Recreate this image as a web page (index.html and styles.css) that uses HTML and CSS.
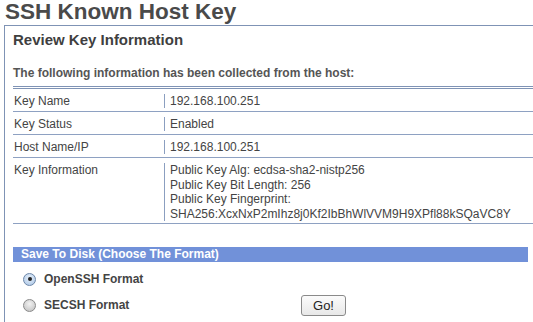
FILE: index.html
```html
<!DOCTYPE html>
<html lang="en">
<head>
    <meta charset="UTF-8">
    <title>SSH Known Host Key</title>
    <link rel="stylesheet" href="styles.css">
</head>
<body>
    <h1 class="page-title">SSH Known Host Key</h1>
    <div class="panel">
        <h2 class="panel-title">Review Key Information</h2>
        <p class="intro">The following information has been collected from the host:</p>

        <table class="key-table">
            <tr>
                <td class="key-label">Key Name</td>
                <td><div class="key-value">192.168.100.251</div></td>
            </tr>
            <tr>
                <td class="key-label">Key Status</td>
                <td><div class="key-value">Enabled</div></td>
            </tr>
            <tr>
                <td class="key-label">Host Name/IP</td>
                <td><div class="key-value">192.168.100.251</div></td>
            </tr>
            <tr class="multi">
                <td class="key-label">Key Information</td>
                <td>
                    <div class="key-value">
                        Public Key Alg: ecdsa-sha2-nistp256<br>
                        Public Key Bit Length: 256<br>
                        Public Key Fingerprint:<br>
                        SHA256:XcxNxP2mIhz8j0Kf2IbBhWlVVM9H9XPfl88kSQaVC8Y
                    </div>
                </td>
            </tr>
        </table>

        <div class="section-bar">Save To Disk (Choose The Format)</div>
        <form class="save-form">
            <label class="format-row">
                <input type="radio" name="format" value="openssh" checked>
                <span>OpenSSH Format</span>
            </label>
            <div class="format-row">
                <label class="format-option">
                    <input type="radio" name="format" value="secsh">
                    <span>SECSH Format</span>
                </label>
                <button type="button" class="go-button">Go!</button>
            </div>
        </form>
    </div>
</body>
</html>
```

FILE: styles.css
```css
* {
    margin: 0;
    padding: 0;
    box-sizing: border-box;
}
html, body {
    overflow: hidden;
}
body {
    font-family: "Liberation Sans", Arial, sans-serif;
    color: #444;
    background: #fff;
}
.page-title {
    font-size: 22.5px;
    line-height: 24px;
    color: #4a4a4a;
    padding-left: 5px;
    height: 25px;
}
.panel {
    margin-left: 4px;
    border-top: 1px solid #7f93b5;
    border-left: 1px solid #7f93b5;
    padding: 5px 0 0 8px;
    height: 300px;
}
.panel-title {
    font-size: 15px;
    line-height: 18px;
    color: #3f3f3f;
}
.intro {
    font-size: 12px;
    font-weight: bold;
    color: #555;
    margin-top: 17px;
    line-height: 14px;
}
.key-table {
    width: calc(100% + 2px);
    border-collapse: collapse;
    margin-top: 6px;
    border-top: 3px double #7f93b5;
    font-size: 12px;
    color: #444;
}
.key-table td {
    border-bottom: 1px solid #8ea1c2;
    vertical-align: top;
    padding: 5px 0 3px;
}
.key-table .multi td {
    padding-bottom: 2px;
}
.key-table td.key-label {
    width: 151px;
    padding-left: 1px;
}
.key-value {
    border-left: 1px solid #8b9fc0;
    padding-left: 5px;
    line-height: 14px;
}
.multi .key-value {
    line-height: 14.5px;
}
.section-bar {
    margin-top: 23px;
    margin-right: 5px;
    background: #7191d9;
    color: #fff;
    font-size: 12px;
    font-weight: bold;
    line-height: 15px;
    padding-left: 8px;
}
.save-form {
    font-size: 12px;
    font-weight: bold;
    color: #444;
}
.format-row {
    display: flex;
    align-items: center;
    height: 26px;
    padding-left: 10px;
}
.save-form .format-row:first-child {
    margin-top: 4px;
}
.format-option {
    display: flex;
    align-items: center;
    width: 278px;
}
.format-row input {
    appearance: none;
    width: 13px;
    height: 13px;
    border-radius: 50%;
    border: 1px solid #8a8a8a;
    background: radial-gradient(circle at 50% 35%, #f2f2f2, #bdbdbd);
    margin-right: 8px;
    display: grid;
    place-items: center;
}
.format-row input:checked {
    border-color: #6c86a8;
    background: radial-gradient(circle at 50% 35%, #e6f0fb, #a9c4e4);
}
.format-row input:checked::after {
    content: "";
    width: 4px;
    height: 4px;
    border-radius: 50%;
    background: #222;
}
.go-button {
    font-family: "Liberation Sans", Arial, sans-serif;
    font-size: 13px;
    padding: 0;
    width: 45px;
    height: 21px;
    border: 1px solid #8a8a8a;
    border-radius: 3px;
    background: linear-gradient(#fbfbfb, #e8e8e8);
    color: #222;
}
```
